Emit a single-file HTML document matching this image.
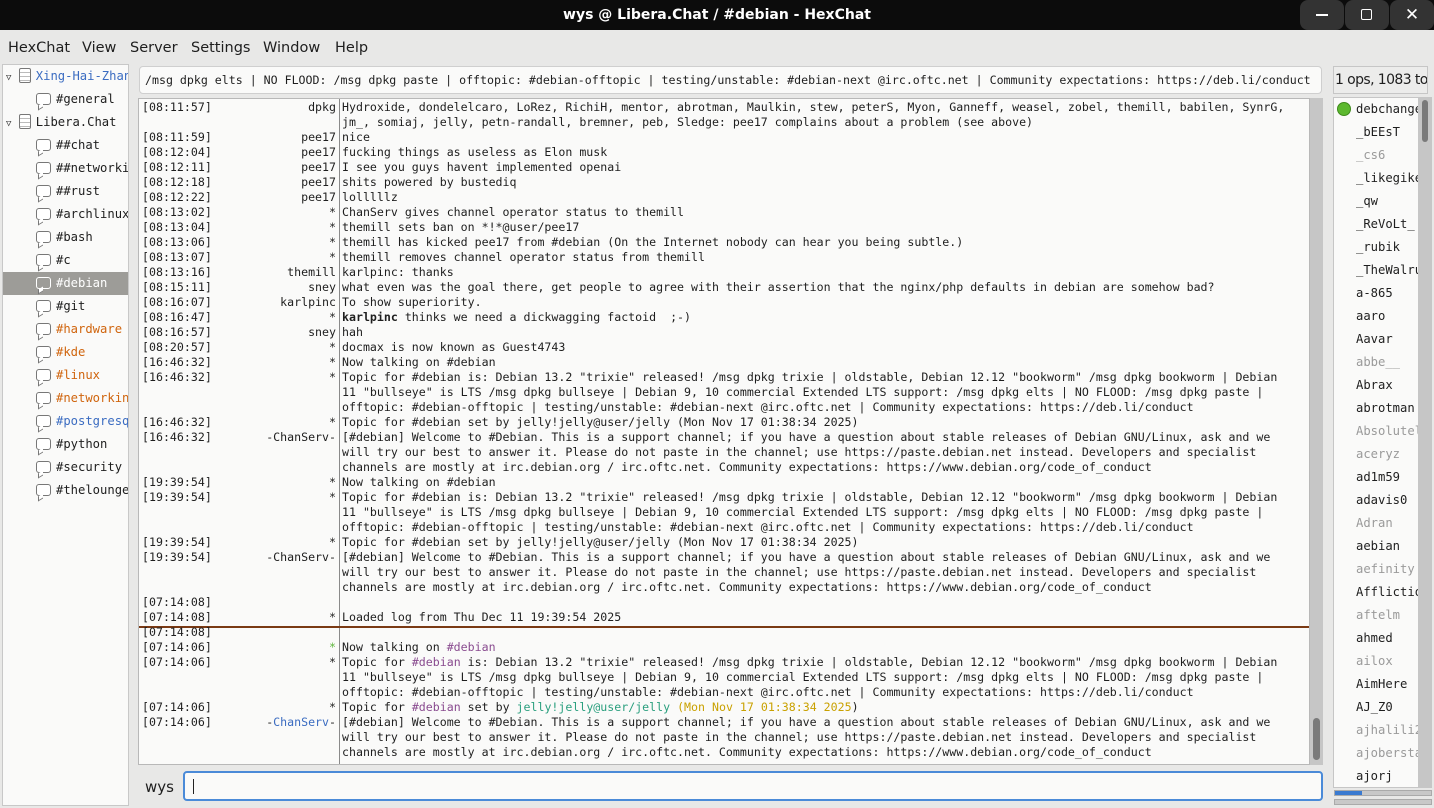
<!DOCTYPE html>
<html><head><meta charset="utf-8"><style>
*{margin:0;padding:0;box-sizing:border-box}
body{width:1434px;height:808px;overflow:hidden;background:#e8e8e7;font-family:"DejaVu Sans Mono","Liberation Mono",monospace;color:#1e1e1e;position:relative}
.abs{position:absolute}
#title{left:0;top:0;width:1434px;height:30px;background:#0c0c0c;color:#fff;font:bold 14px "DejaVu Sans","Liberation Sans",sans-serif;text-align:center;line-height:30px}
.wb{top:0;width:44px;height:30px;background:#333;border-radius:8px}
#menu{left:0;top:30px;width:1434px;height:32px;font:14.5px "DejaVu Sans","Liberation Sans",sans-serif;line-height:33px}
#menu span{position:absolute;top:2px}
#tree{left:2px;top:64px;width:127px;height:742px;background:#fafaf9;border:1px solid #c8c8c8;overflow:hidden;font-size:12.2px}
.ti{position:absolute;height:23px;line-height:23px;white-space:nowrap}
.ic{display:inline-block;width:15px;height:12px;border:1.3px solid #777;border-radius:3px;vertical-align:-2px;margin-right:5px;position:relative;background:#fff}
.ic:after{content:"";position:absolute;left:1px;bottom:-5px;width:4px;height:4px;border-left:1.3px solid #777;border-bottom:1.3px solid #777;background:#fff;transform:skewY(-30deg)}
.sv{display:inline-block;width:12px;height:15px;border:1.3px solid #777;border-radius:2px;vertical-align:-3px;margin-right:5px;background:repeating-linear-gradient(#fff 0 3px,#bbb 3px 4px)}
#topic{left:139px;top:66px;width:1183px;height:28px;background:#fafaf9;border:1px solid #cfcfcf;border-radius:4px;font-size:11.6px;line-height:27px;padding-left:5px;white-space:nowrap;overflow:hidden}
#chat{left:138px;top:98px;width:1172px;height:667px;background:#fafaf9;border:1px solid #b8b8b8;overflow:hidden;font-size:11.6px}
#sep{left:200px;top:0;width:1px;height:667px;background:#8a8a8a}
.r{position:absolute;left:0;height:15px;line-height:15px;white-space:pre;width:1170px}
.t{position:absolute;left:3px}
.n{position:absolute;right:973px;text-align:right}
.m{position:absolute;left:203px}
.p{color:#894b8f}.g{color:#2a9f7e}.y{color:#c9a100}.b{color:#3b6cc1}.gr{color:#5fb63d}
#vs{left:1310px;top:98px;width:13px;height:667px;background:#c6c6c6}
#ul{left:1333px;top:66px;width:95px;height:28px;border:1px solid #c6c6c6;background:#ececeb;font:14px "DejaVu Sans","Liberation Sans",sans-serif;letter-spacing:-0.6px;line-height:27px;white-space:nowrap;overflow:hidden;padding-left:1px}
#nl{left:1333px;top:97px;width:86px;height:691px;background:#fafaf9;border:1px solid #c6c6c6;overflow:hidden;font-size:12.2px}
.u{position:absolute;left:9px;height:23px;line-height:23px;white-space:nowrap}
.aw{color:#9a9a9a}
</style></head><body>
<div id="title" class="abs">wys @ Libera.Chat / #debian - HexChat</div>
<div class="abs wb" style="left:1300px"><div class="abs" style="left:16px;top:14px;width:12px;height:1.5px;background:#fff"></div></div>
<div class="abs wb" style="left:1345px"><div class="abs" style="left:16px;top:9px;width:11px;height:11px;border:1.5px solid #fff;border-radius:2px"></div></div>
<div class="abs wb" style="left:1390px;color:#fff;font:17px 'DejaVu Sans',sans-serif;text-align:center;line-height:30px">✕</div>
<div id="menu" class="abs"><span style="left:8px">HexChat</span><span style="left:82px">View</span><span style="left:130px">Server</span><span style="left:191px">Settings</span><span style="left:263px">Window</span><span style="left:335px">Help</span></div>
<div id="tree" class="abs">
<div class="ti" style="left:3px;top:0;color:#3b6cc1"><span style="color:#333;font-size:9px">▽</span> <span class="sv"></span>Xing-Hai-Zhan</div>
<div class="ti" style="left:33px;top:23px"><span class="ic"></span>#general</div>
<div class="ti" style="left:3px;top:46px"><span style="color:#333;font-size:9px">▽</span> <span class="sv"></span>Libera.Chat</div>
<div class="ti" style="left:33px;top:69px"><span class="ic"></span>##chat</div>
<div class="ti" style="left:33px;top:92px"><span class="ic"></span>##networking</div>
<div class="ti" style="left:33px;top:115px"><span class="ic"></span>##rust</div>
<div class="ti" style="left:33px;top:138px"><span class="ic"></span>#archlinux</div>
<div class="ti" style="left:33px;top:161px"><span class="ic"></span>#bash</div>
<div class="ti" style="left:33px;top:184px"><span class="ic"></span>#c</div>
<div class="abs" style="left:0;top:207px;width:127px;height:23px;background:#9d9c98"></div>
<div class="ti" style="left:33px;top:207px;color:#fff"><span class="ic" style="border-color:#fff;background:#9d9c98"></span>#debian</div>
<div class="ti" style="left:33px;top:230px"><span class="ic"></span>#git</div>
<div class="ti" style="left:33px;top:253px;color:#d0650e"><span class="ic"></span>#hardware</div>
<div class="ti" style="left:33px;top:276px;color:#d0650e"><span class="ic"></span>#kde</div>
<div class="ti" style="left:33px;top:299px;color:#d0650e"><span class="ic"></span>#linux</div>
<div class="ti" style="left:33px;top:322px;color:#d0650e"><span class="ic"></span>#networking</div>
<div class="ti" style="left:33px;top:345px;color:#3b6cc1"><span class="ic"></span>#postgresql</div>
<div class="ti" style="left:33px;top:368px"><span class="ic"></span>#python</div>
<div class="ti" style="left:33px;top:391px"><span class="ic"></span>#security</div>
<div class="ti" style="left:33px;top:414px"><span class="ic"></span>#thelounge</div>
</div>
<div id="topic" class="abs">/msg dpkg elts | NO FLOOD: /msg dpkg paste | offtopic: #debian-offtopic | testing/unstable: #debian-next @irc.oftc.net | Community expectations: https://deb.li/conduct</div>
<div id="chat" class="abs">
<div id="sep" class="abs"></div>
<div class="abs" style="left:0;top:527px;width:1172px;height:1.5px;background:#7a3a14"></div>
<div class="r" style="top:1px"><span class="t">[08:11:57]</span><span class="n">dpkg</span><span class="m">Hydroxide, dondelelcaro, LoRez, RichiH, mentor, abrotman, Maulkin, stew, peterS, Myon, Ganneff, weasel, zobel, themill, babilen, SynrG,</span></div>
<div class="r" style="top:16px"><span class="m">jm_, somiaj, jelly, petn-randall, bremner, peb, Sledge: pee17 complains about a problem (see above)</span></div>
<div class="r" style="top:31px"><span class="t">[08:11:59]</span><span class="n">pee17</span><span class="m">nice</span></div>
<div class="r" style="top:46px"><span class="t">[08:12:04]</span><span class="n">pee17</span><span class="m">fucking things as useless as Elon musk</span></div>
<div class="r" style="top:61px"><span class="t">[08:12:11]</span><span class="n">pee17</span><span class="m">I see you guys havent implemented openai</span></div>
<div class="r" style="top:76px"><span class="t">[08:12:18]</span><span class="n">pee17</span><span class="m">shits powered by bustediq</span></div>
<div class="r" style="top:91px"><span class="t">[08:12:22]</span><span class="n">pee17</span><span class="m">lolllllz</span></div>
<div class="r" style="top:106px"><span class="t">[08:13:02]</span><span class="n">*</span><span class="m">ChanServ gives channel operator status to themill</span></div>
<div class="r" style="top:121px"><span class="t">[08:13:04]</span><span class="n">*</span><span class="m">themill sets ban on *!*@user/pee17</span></div>
<div class="r" style="top:136px"><span class="t">[08:13:06]</span><span class="n">*</span><span class="m">themill has kicked pee17 from #debian (On the Internet nobody can hear you being subtle.)</span></div>
<div class="r" style="top:151px"><span class="t">[08:13:07]</span><span class="n">*</span><span class="m">themill removes channel operator status from themill</span></div>
<div class="r" style="top:166px"><span class="t">[08:13:16]</span><span class="n">themill</span><span class="m">karlpinc: thanks</span></div>
<div class="r" style="top:181px"><span class="t">[08:15:11]</span><span class="n">sney</span><span class="m">what even was the goal there, get people to agree with their assertion that the nginx/php defaults in debian are somehow bad?</span></div>
<div class="r" style="top:196px"><span class="t">[08:16:07]</span><span class="n">karlpinc</span><span class="m">To show superiority.</span></div>
<div class="r" style="top:211px"><span class="t">[08:16:47]</span><span class="n">*</span><span class="m"><b>karlpinc</b> thinks we need a dickwagging factoid  ;-)</span></div>
<div class="r" style="top:226px"><span class="t">[08:16:57]</span><span class="n">sney</span><span class="m">hah</span></div>
<div class="r" style="top:241px"><span class="t">[08:20:57]</span><span class="n">*</span><span class="m">docmax is now known as Guest4743</span></div>
<div class="r" style="top:256px"><span class="t">[16:46:32]</span><span class="n">*</span><span class="m">Now talking on #debian</span></div>
<div class="r" style="top:271px"><span class="t">[16:46:32]</span><span class="n">*</span><span class="m">Topic for #debian is: Debian 13.2 "trixie" released! /msg dpkg trixie | oldstable, Debian 12.12 "bookworm" /msg dpkg bookworm | Debian</span></div>
<div class="r" style="top:286px"><span class="m">11 "bullseye" is LTS /msg dpkg bullseye | Debian 9, 10 commercial Extended LTS support: /msg dpkg elts | NO FLOOD: /msg dpkg paste |</span></div>
<div class="r" style="top:301px"><span class="m">offtopic: #debian-offtopic | testing/unstable: #debian-next @irc.oftc.net | Community expectations: https://deb.li/conduct</span></div>
<div class="r" style="top:316px"><span class="t">[16:46:32]</span><span class="n">*</span><span class="m">Topic for #debian set by jelly!jelly@user/jelly (Mon Nov 17 01:38:34 2025)</span></div>
<div class="r" style="top:331px"><span class="t">[16:46:32]</span><span class="n">-ChanServ-</span><span class="m">[#debian] Welcome to #Debian. This is a support channel; if you have a question about stable releases of Debian GNU/Linux, ask and we</span></div>
<div class="r" style="top:346px"><span class="m">will try our best to answer it. Please do not paste in the channel; use https://paste.debian.net instead. Developers and specialist</span></div>
<div class="r" style="top:361px"><span class="m">channels are mostly at irc.debian.org / irc.oftc.net. Community expectations: https://www.debian.org/code_of_conduct</span></div>
<div class="r" style="top:376px"><span class="t">[19:39:54]</span><span class="n">*</span><span class="m">Now talking on #debian</span></div>
<div class="r" style="top:391px"><span class="t">[19:39:54]</span><span class="n">*</span><span class="m">Topic for #debian is: Debian 13.2 "trixie" released! /msg dpkg trixie | oldstable, Debian 12.12 "bookworm" /msg dpkg bookworm | Debian</span></div>
<div class="r" style="top:406px"><span class="m">11 "bullseye" is LTS /msg dpkg bullseye | Debian 9, 10 commercial Extended LTS support: /msg dpkg elts | NO FLOOD: /msg dpkg paste |</span></div>
<div class="r" style="top:421px"><span class="m">offtopic: #debian-offtopic | testing/unstable: #debian-next @irc.oftc.net | Community expectations: https://deb.li/conduct</span></div>
<div class="r" style="top:436px"><span class="t">[19:39:54]</span><span class="n">*</span><span class="m">Topic for #debian set by jelly!jelly@user/jelly (Mon Nov 17 01:38:34 2025)</span></div>
<div class="r" style="top:451px"><span class="t">[19:39:54]</span><span class="n">-ChanServ-</span><span class="m">[#debian] Welcome to #Debian. This is a support channel; if you have a question about stable releases of Debian GNU/Linux, ask and we</span></div>
<div class="r" style="top:466px"><span class="m">will try our best to answer it. Please do not paste in the channel; use https://paste.debian.net instead. Developers and specialist</span></div>
<div class="r" style="top:481px"><span class="m">channels are mostly at irc.debian.org / irc.oftc.net. Community expectations: https://www.debian.org/code_of_conduct</span></div>
<div class="r" style="top:496px"><span class="t">[07:14:08]</span></div>
<div class="r" style="top:511px"><span class="t">[07:14:08]</span><span class="n">*</span><span class="m">Loaded log from Thu Dec 11 19:39:54 2025</span></div>
<div class="r" style="top:526px"><span class="t">[07:14:08]</span></div>
<div class="r" style="top:541px"><span class="t">[07:14:06]</span><span class="n gr">*</span><span class="m">Now talking on <span class="p">#debian</span></span></div>
<div class="r" style="top:556px"><span class="t">[07:14:06]</span><span class="n">*</span><span class="m">Topic for <span class="p">#debian</span> is: Debian 13.2 "trixie" released! /msg dpkg trixie | oldstable, Debian 12.12 "bookworm" /msg dpkg bookworm | Debian</span></div>
<div class="r" style="top:571px"><span class="m">11 "bullseye" is LTS /msg dpkg bullseye | Debian 9, 10 commercial Extended LTS support: /msg dpkg elts | NO FLOOD: /msg dpkg paste |</span></div>
<div class="r" style="top:586px"><span class="m">offtopic: #debian-offtopic | testing/unstable: #debian-next @irc.oftc.net | Community expectations: https://deb.li/conduct</span></div>
<div class="r" style="top:601px"><span class="t">[07:14:06]</span><span class="n">*</span><span class="m">Topic for <span class="p">#debian</span> set by <span class="g">jelly!jelly@user/jelly</span> <span class="y">(Mon Nov 17 01:38:34 2025</span>)</span></div>
<div class="r" style="top:616px"><span class="t">[07:14:06]</span><span class="n">-<span class="b">ChanServ</span>-</span><span class="m">[#debian] Welcome to #Debian. This is a support channel; if you have a question about stable releases of Debian GNU/Linux, ask and we</span></div>
<div class="r" style="top:631px"><span class="m">will try our best to answer it. Please do not paste in the channel; use https://paste.debian.net instead. Developers and specialist</span></div>
<div class="r" style="top:646px"><span class="m">channels are mostly at irc.debian.org / irc.oftc.net. Community expectations: https://www.debian.org/code_of_conduct</span></div>
</div>
<div id="vs" class="abs"><div class="abs" style="left:3px;top:620px;width:7px;height:42px;background:#7a7a7a;border-radius:4px"></div></div>
<div class="abs" style="left:145px;top:778px;font:15px 'DejaVu Sans','Liberation Sans',sans-serif">wys</div>
<div class="abs" style="left:183px;top:771px;width:1140px;height:30px;background:#fafaf9;border:2px solid #4a8ad8;border-radius:4px"><div class="abs" style="left:8px;top:6px;width:1px;height:15px;background:#222"></div></div>
<div id="ul" class="abs">1 ops, 1083 total</div>
<div id="nl" class="abs">
<div class="abs" style="left:3px;top:4px;width:14px;height:14px;border-radius:50%;background:#5cb82e;border:1px solid #3f8a1c"></div>
<div class="u" style="top:0;left:22px">debchange</div>
<div class="u" style="top:23px;left:22px">_bEEsT</div>
<div class="u aw" style="top:46px;left:22px">_cs6</div>
<div class="u" style="top:69px;left:22px">_likegike</div>
<div class="u" style="top:92px;left:22px">_qw</div>
<div class="u" style="top:115px;left:22px">_ReVoLt_</div>
<div class="u" style="top:138px;left:22px">_rubik</div>
<div class="u" style="top:161px;left:22px">_TheWalrus</div>
<div class="u" style="top:184px;left:22px">a-865</div>
<div class="u" style="top:207px;left:22px">aaro</div>
<div class="u" style="top:230px;left:22px">Aavar</div>
<div class="u aw" style="top:253px;left:22px">abbe__</div>
<div class="u" style="top:276px;left:22px">Abrax</div>
<div class="u" style="top:299px;left:22px">abrotman</div>
<div class="u aw" style="top:322px;left:22px">Absolutely</div>
<div class="u aw" style="top:345px;left:22px">aceryz</div>
<div class="u" style="top:368px;left:22px">ad1m59</div>
<div class="u" style="top:391px;left:22px">adavis0</div>
<div class="u aw" style="top:414px;left:22px">Adran</div>
<div class="u" style="top:437px;left:22px">aebian</div>
<div class="u aw" style="top:460px;left:22px">aefinity</div>
<div class="u" style="top:483px;left:22px">Affliction</div>
<div class="u aw" style="top:506px;left:22px">aftelm</div>
<div class="u" style="top:529px;left:22px">ahmed</div>
<div class="u aw" style="top:552px;left:22px">ailox</div>
<div class="u" style="top:575px;left:22px">AimHere</div>
<div class="u" style="top:598px;left:22px">AJ_Z0</div>
<div class="u aw" style="top:621px;left:22px">ajhalili2</div>
<div class="u aw" style="top:644px;left:22px">ajobersta</div>
<div class="u" style="top:667px;left:22px">ajorj</div>
</div>
<div class="abs" style="left:1419px;top:97px;width:13px;height:691px;background:#c6c6c6"><div class="abs" style="left:3px;top:3px;width:6px;height:42px;background:#7a7a7a;border-radius:3px"></div></div>
<div class="abs" style="left:1334px;top:790px;width:98px;height:6px;background:#c8c8c8;border:1px solid #aaa"><div class="abs" style="left:0;top:0;width:27px;height:4px;background:#3a7ad0"></div></div>
<div class="abs" style="left:1334px;top:799px;width:98px;height:6px;background:#c8c8c8;border:1px solid #aaa"></div>
</body></html>
